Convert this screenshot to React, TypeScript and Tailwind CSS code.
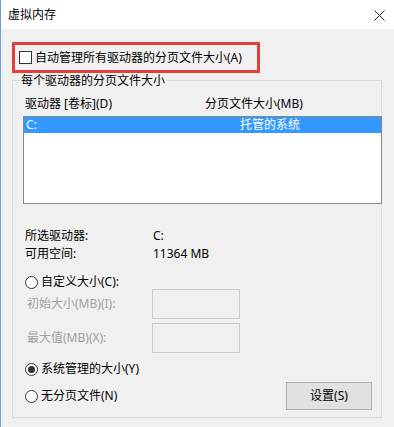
function Radio({ checked = false }: { checked?: boolean }) {
  return (
    <span className="flex h-[13px] w-[13px] shrink-0 items-center justify-center rounded-full border border-[#333333] bg-white">
      {checked && <span className="h-[7px] w-[7px] rounded-full bg-[#333333]" />}
    </span>
  );
}

function DisabledInput() {
  return <div className="h-[30px] w-[88px] border border-[#cccccc] bg-[#f0f0f0]" />;
}

export default function App() {
  return (
    <div
      className="flex h-[427px] w-[394px] flex-col overflow-hidden border-l border-[#6e9fd6] text-[12px] leading-[16px] text-black"
      style={{ fontFamily: '"Noto Sans", "Noto Sans CJK SC", sans-serif' }}
    >
      {/* title bar */}
      <div className="flex h-[29px] shrink-0 items-center justify-between bg-white pl-[7px] pr-[9px]">
        <span>虚拟内存</span>
        <svg width="11" height="11" viewBox="0 0 11 11" className="mt-[1px]">
          <path d="M0.5 0.5 L10.5 10.5 M10.5 0.5 L0.5 10.5" stroke="#222" strokeWidth="1" />
        </svg>
      </div>

      <div className="flex flex-1 flex-col bg-[#f0f0f0] pl-[11px]">
        {/* highlighted checkbox */}
        <div className="mt-[13px] flex h-[31px] w-[248px] items-center border-[3px] border-[#e0403f] pl-[4px]">
          <span className="h-[13px] w-[13px] border border-[#333333] bg-white" />
          <span className="ml-[3px]">自动管理所有驱动器的分页文件大小(A)</span>
        </div>

        {/* group box */}
        <div className="mt-[7px] flex h-[338px] w-[370px] flex-col border border-[#dcdcdc]">
          <span className="-mt-[8px] ml-[7px] w-fit bg-[#f0f0f0] px-[1px]">每个驱动器的分页文件大小</span>

          <div className="mt-[7px] flex pl-[12px]">
            <span className="w-[180px]">驱动器 [卷标](D)</span>
            <span>分页文件大小(MB)</span>
          </div>

          <div className="-mr-[1px] ml-[10px] mt-[4px] h-[88px] border border-[#828790] bg-white">
            <div className="flex h-[16px] items-center bg-[#3399ff] pl-[2px] text-white">
              <span className="w-[214px]">C:</span>
              <span>托管的系统</span>
            </div>
          </div>

          <div className="mt-[24px] flex pl-[12px]">
            <span className="w-[128px]">所选驱动器:</span>
            <span>C:</span>
          </div>
          <div className="mt-[2px] flex pl-[12px]">
            <span className="w-[128px]">可用空间:</span>
            <span>11364 MB</span>
          </div>

          <div className="mt-[12px] flex items-center pl-[12px]">
            <Radio />
            <span className="ml-[3px]">自定义大小(C):</span>
          </div>

          <div className="-mt-[1px] flex h-[30px] items-center pl-[14px] text-[#a0a0a0]">
            <span className="w-[125px]">初始大小(MB)(I):</span>
            <DisabledInput />
          </div>
          <div className="mt-[4px] flex h-[30px] items-center pl-[14px] text-[#a0a0a0]">
            <span className="w-[125px]">最大值(MB)(X):</span>
            <DisabledInput />
          </div>

          <div className="mt-[8px] flex items-center pl-[12px]">
            <Radio checked />
            <span className="ml-[3px]">系统管理的大小(Y)</span>
          </div>

          <div className="mt-[5px] flex h-[28px] items-center justify-between pl-[12px] pr-[9px]">
            <div className="flex items-center">
              <Radio />
              <span className="ml-[3px]">无分页文件(N)</span>
            </div>
            <button className="h-[28px] w-[86px] border border-[#adadad] bg-[#e1e1e1]">设置(S)</button>
          </div>
        </div>
      </div>
    </div>
  );
}
